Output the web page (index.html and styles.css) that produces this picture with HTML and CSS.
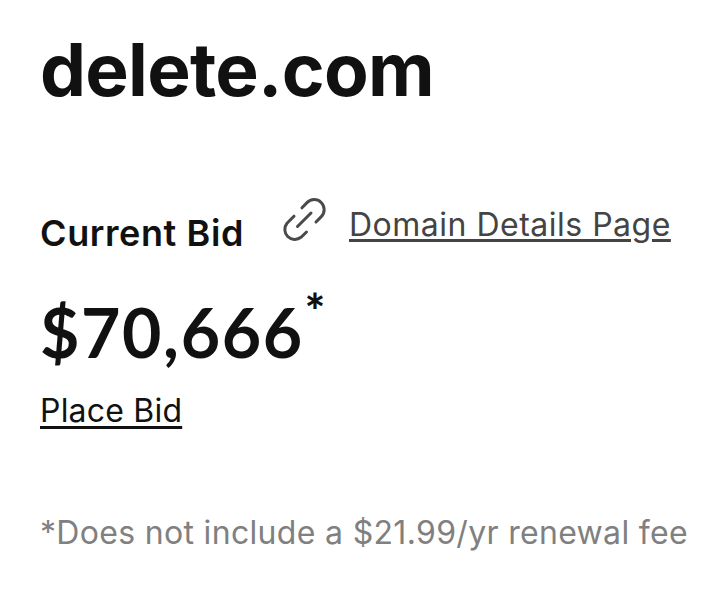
FILE: index.html
```html
<!DOCTYPE html>
<html lang="en">
<head>
    <meta charset="UTF-8">
    <meta name="viewport" content="width=device-width, initial-scale=1.0">
    <title>delete.com</title>
    <link rel="stylesheet" href="styles.css">
</head>
<body>
    <main class="listing">
        <h1 class="domain">delete.com</h1>
        <div class="bid-header">
            <h2 class="bid-label">Current Bid</h2>
            <svg class="link-icon" viewBox="0 0 48 48" aria-hidden="true">
                <path d="M22 11.8 L27 6.6 A10 10 0 0 1 41.3 20.6 L36 26"/>
                <path d="M14 20.2 L7 27.2 A10 10 0 0 0 21 41.3 L26.5 36"/>
                <path d="M17.5 30.5 L31 17"/>
            </svg>
            <a class="details-link" href="#">Domain Details Page</a>
        </div>
        <div class="price"><span class="amount">$70,666</span><span class="star">*</span></div>
        <a class="place-bid" href="#">Place Bid</a>
        <p class="fee-note">*Does not include a $21.99/yr renewal fee</p>
    </main>
</body>
</html>
```
FILE: styles.css
```css
body {
    margin: 0;
    background: #fff;
    color: #111;
    font-family: "Inter", sans-serif;
}

.listing {
    display: flex;
    flex-direction: column;
    align-items: flex-start;
    padding: 28px 0 0 40px;
}

h1, h2, p {
    margin: 0;
}

a {
    color: inherit;
    text-decoration-thickness: 3px;
    text-underline-offset: 4px;
}

.domain {
    font-size: 73px;
    line-height: 84px;
    font-weight: 700;
    letter-spacing: -0.7px;
}

.bid-header {
    display: flex;
    align-items: flex-start;
    margin-top: 84px;
}

.bid-label {
    width: 240px;
    margin-top: 14px;
    font-size: 36px;
    line-height: 46px;
    font-weight: 600;
    letter-spacing: 0.6px;
}

.link-icon {
    width: 48px;
    height: 48px;
    fill: none;
    stroke: #4a4a4a;
    stroke-width: 3;
    stroke-linecap: round;
}

.details-link {
    margin-left: 21px;
    margin-top: 7px;
    color: #444;
    font-size: 32px;
    line-height: 44px;
    letter-spacing: 0.5px;
    text-underline-offset: 3px;
}

.price {
    display: flex;
    margin-top: 34px;
    font-family: "Lato", sans-serif;
    font-weight: 700;
}

.amount {
    font-size: 68px;
    line-height: 84px;
    letter-spacing: 1.6px;
}

.star {
    margin-left: 1px;
    font-size: 48px;
    font-weight: 900;
    line-height: 42px;
}

.place-bid {
    margin-top: 15px;
    font-size: 32px;
    line-height: 44px;
    letter-spacing: 0.2px;
}

.fee-note {
    margin-top: 78px;
    color: #808080;
    font-size: 32px;
    line-height: 44px;
    letter-spacing: 0.32px;
}
```
